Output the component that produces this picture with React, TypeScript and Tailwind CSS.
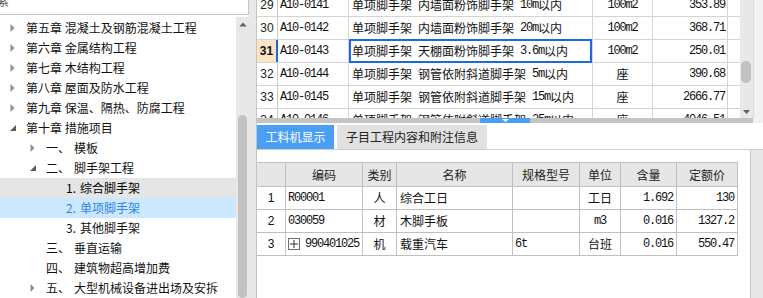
import React from "react";

const CJK = "font-['Noto_Sans_CJK_SC','Noto_Sans',sans-serif]";

function Mixed({ text }: { text: string }) {
  const parts = text.split(/([\x00-\x7F]+)/).filter((p) => p.length > 0);
  return (
    <>
      {parts.map((p, i) =>
        /^[\x00-\x7F]+$/.test(p) ? (
          <span key={i} className="font-['Liberation_Mono',monospace] tracking-[-1.2px] whitespace-pre">
            {p}
          </span>
        ) : (
          <span key={i}>{p}</span>
        )
      )}
    </>
  );
}

function ArrowRight() {
  return (
    <svg width="5" height="8" viewBox="0 0 5 8" className="block">
      <path d="M0.5 0 L4.5 4 L0.5 8 Z" fill="#8f8f8f" />
    </svg>
  );
}

function ArrowDown() {
  return (
    <svg width="6" height="6" viewBox="0 0 6 6" className="block">
      <path d="M6 0 L6 6 L0 6 Z" fill="#5a5a5a" />
    </svg>
  );
}

type TreeItem = {
  level: 0 | 1 | 2;
  arrow?: "r" | "d";
  num?: string;
  text: string;
  state?: "hover" | "sel";
};

const tree: TreeItem[] = [
  { level: 0, arrow: "r", text: "第五章 混凝土及钢筋混凝土工程" },
  { level: 0, arrow: "r", text: "第六章 金属结构工程" },
  { level: 0, arrow: "r", text: "第七章 木结构工程" },
  { level: 0, arrow: "r", text: "第八章 屋面及防水工程" },
  { level: 0, arrow: "r", text: "第九章 保温、隔热、防腐工程" },
  { level: 0, arrow: "d", text: "第十章 措施项目" },
  { level: 1, arrow: "r", num: "一、", text: "模板" },
  { level: 1, arrow: "d", num: "二、", text: "脚手架工程" },
  { level: 2, num: "1.", text: "综合脚手架", state: "hover" },
  { level: 2, num: "2.", text: "单项脚手架", state: "sel" },
  { level: 2, num: "3.", text: "其他脚手架" },
  { level: 1, num: "三、", text: "垂直运输" },
  { level: 1, num: "四、", text: "建筑物超高增加费" },
  { level: 1, arrow: "r", num: "五、", text: "大型机械设备进出场及安拆" },
];

function TreeRow({ item }: { item: TreeItem }) {
  const bg =
    item.state === "hover"
      ? "bg-[#e5e5e5]"
      : item.state === "sel"
      ? "bg-[#cce8ff] text-[#2e86e6]"
      : "text-[#111111]";
  const arrow = item.arrow === "r" ? <ArrowRight /> : item.arrow === "d" ? <ArrowDown /> : null;
  if (item.level === 0) {
    return (
      <div className={`flex h-[20px] items-center pl-[10px] whitespace-nowrap ${bg}`}>
        <div className="flex w-[16px] items-center">{arrow}</div>
        <span>{item.text}</span>
      </div>
    );
  }
  if (item.level === 1) {
    return (
      <div className={`flex h-[20px] items-center pl-[30px] whitespace-nowrap ${bg}`}>
        <div className="flex w-[16px] items-center">{arrow}</div>
        <span className="w-[28px]">{item.num}</span>
        <span>{item.text}</span>
      </div>
    );
  }
  return (
    <div className={`flex h-[20px] items-center pl-[66px] whitespace-nowrap ${bg}`}>
      <span className="w-[14px]">{item.num}</span>
      <span>{item.text}</span>
    </div>
  );
}

const topRows = [
  { n: "29", code: "A10-0141", name: "单项脚手架 内墙面粉饰脚手架 10m以内", unit: "100m2", price: "353.89" },
  { n: "30", code: "A10-0142", name: "单项脚手架 内墙面粉饰脚手架 20m以内", unit: "100m2", price: "368.71" },
  { n: "31", code: "A10-0143", name: "单项脚手架 天棚面粉饰脚手架 3.6m以内", unit: "100m2", price: "250.01", sel: true },
  { n: "32", code: "A10-0144", name: "单项脚手架 钢管依附斜道脚手架 5m以内", unit: "座", price: "390.68" },
  { n: "33", code: "A10-0145", name: "单项脚手架 钢管依附斜道脚手架 15m以内", unit: "座", price: "2666.77" },
  { n: "34", code: "A10-0146", name: "单项脚手架 钢管依附斜道脚手架 25m以内", unit: "座", price: "4046.51" },
];

const lowRows = [
  { n: "1", code: "R00001", cat: "人", name: "综合工日", spec: "", unit: "工日", qty: "1.692", price: "130" },
  { n: "2", code: "030059", cat: "材", name: "木脚手板", spec: "", unit: "m3", qty: "0.016", price: "1327.2" },
  { n: "3", code: "990401025", cat: "机", name: "载重汽车", spec: "6t", unit: "台班", qty: "0.016", price: "550.47", plus: true },
];

export default function App() {
  return (
    <div className={`flex h-[298px] w-[763px] overflow-hidden bg-white text-[12px] leading-none ${CJK}`}>
      {/* Left panel */}
      <div className="flex w-[249px] flex-col">
        <div className="h-[15px] shrink-0 overflow-hidden border-b border-r border-[#c6c6c6] bg-white">
          <span className="-ml-[3px] -mt-[5px] block text-[#555555]">索</span>
        </div>
        <div className="flex min-h-0 flex-1 pt-[2px]">
          <div className="w-[236px] overflow-hidden pt-px">
            {tree.map((t, i) => (
              <TreeRow key={i} item={t} />
            ))}
          </div>
          <div className="flex w-[13px] flex-col items-center bg-[#e8e8e8] pt-[5px]">
            <svg width="8" height="5" viewBox="0 0 8 5" className="block">
              <path d="M0 5 L4 0.5 L8 5 Z" fill="#606060" />
            </svg>
            <div className="mt-[88px] h-[200px] w-[9px] rounded-full bg-[#c2c2c2]" />
          </div>
        </div>
      </div>

      {/* Splitter */}
      <div className="w-[8px] border-r border-[#c4c4c4] bg-[#e8e8e8]" />

      {/* Right panel */}
      <div className="flex w-[506px] flex-col">
        {/* Top grid */}
        <div className="flex h-[118px] shrink-0">
          <div className="w-[483px] overflow-hidden">
            <div className="-mt-[6px]">
              {topRows.map((r) => (
                <div key={r.n} className="flex h-[23px] border-b border-[#d4d4d4]">
                  <div
                    className={`flex w-[21px] items-center justify-center font-['Liberation_Sans',sans-serif] ${
                      r.sel
                        ? "border-r-2 border-[#1a6be0] bg-[#fde4c4] font-bold text-[#111]"
                        : "border-r border-[#c8c8c8] text-[#222]"
                    }`}
                  >
                    {r.n}
                  </div>
                  <div className="flex w-[71px] items-center border-r border-[#d4d4d4] pl-[2px] font-['Liberation_Mono',monospace] tracking-[-1.2px] text-[#111]">
                    {r.code}
                  </div>
                  <div className="relative flex w-[244px] items-center whitespace-pre border-r border-[#d4d4d4] pl-[3px] text-[#111]">
                    <Mixed text={r.name} />
                    {r.sel && (
                      <div className="absolute -top-px left-0 right-0 -bottom-px border-2 border-[#1a6be0]" />
                    )}
                  </div>
                  <div className="flex w-[60px] items-center justify-center border-r border-[#d4d4d4] text-[#111]">
                    <Mixed text={r.unit} />
                  </div>
                  <div className="flex w-[75px] items-center justify-end border-r border-[#d4d4d4] pr-[2px] text-[#111]">
                    <Mixed text={r.price} />
                  </div>
                </div>
              ))}
            </div>
          </div>
          <div className="relative w-[13px] bg-[#e8e8e8]">
            <div className="absolute left-[1px] top-[61px] h-[22px] w-[10px] rounded-full bg-[#c2c2c2]" />
            <svg width="7" height="4" viewBox="0 0 7 4" className="absolute left-[3px] top-[110px] block">
              <path d="M0 0 L7 0 L3.5 4 Z" fill="#606060" />
            </svg>
          </div>
          <div className="w-[10px] border-l border-[#dcdcdc] bg-[#f2f2f2]" />
        </div>
        {/* Horizontal bar */}
        <div className="flex h-[5px] shrink-0">
          <div className="flex w-[496px] bg-[#c4c4c4]">
            <div className="ml-[223px] flex h-full w-[50px] items-center justify-center bg-[#4a9ff5]">
              <svg width="7" height="3" viewBox="0 0 7 3" className="block">
                <path d="M0 0 L7 0 L3.5 3 Z" fill="#ffffff" />
              </svg>
            </div>
          </div>
          <div className="w-[10px] bg-[#f2f2f2]" />
        </div>

        {/* Bottom section */}
        <div className="flex min-h-0 flex-1">
          <div className="flex w-[494px] flex-col">
            <div className="flex h-[27px] shrink-0 items-end gap-[3px] border-b border-[#cfcfcf]">
              <div className="flex h-[24px] w-[77px] items-center justify-center bg-[#4a9ff5] text-white">
                工料机显示
              </div>
              <div className="flex h-[24px] w-[150px] items-center justify-center bg-[#e1e1e1] text-[#222]">
                子目工程内容和附注信息
              </div>
            </div>
            <div className="flex-1 border-r border-[#c8c8c8] pt-[12px]">
              <div className="w-[481px] border-t border-[#c0c0c0]">
                <div className="flex h-[24px] border-b border-[#c0c0c0] bg-[#e6e6e6] text-[#222]">
                  <div className="w-[29px] border-r border-[#c0c0c0]" />
                  <div className="flex w-[77px] items-center justify-center border-r border-[#c0c0c0]">编码</div>
                  <div className="flex w-[34px] items-center justify-center border-r border-[#c0c0c0]">类别</div>
                  <div className="flex w-[116px] items-center justify-center border-r border-[#c0c0c0]">名称</div>
                  <div className="flex w-[67px] items-center justify-center border-r border-[#c0c0c0]">规格型号</div>
                  <div className="flex w-[41px] items-center justify-center border-r border-[#c0c0c0]">单位</div>
                  <div className="flex w-[56px] items-center justify-center border-r border-[#c0c0c0]">含量</div>
                  <div className="flex w-[61px] items-center justify-center border-r border-[#c0c0c0]">定额价</div>
                </div>
                {lowRows.map((r) => (
                  <div key={r.n} className="flex h-[23px] border-b border-[#c0c0c0] text-[#111]">
                    <div className="flex w-[29px] items-center justify-center border-r border-[#c0c0c0] font-['Liberation_Sans',sans-serif]">
                      {r.n}
                    </div>
                    <div className="flex w-[77px] items-center border-r border-[#c0c0c0] pl-[2px]">
                      {r.plus && (
                        <div className="mr-[5px] flex h-[12px] w-[12px] items-center justify-center border border-[#707070]">
                          <svg width="8" height="8" viewBox="0 0 8 8" className="block">
                            <path d="M4 0 V8 M0 4 H8" stroke="#333" strokeWidth="1" />
                          </svg>
                        </div>
                      )}
                      <Mixed text={r.code} />
                    </div>
                    <div className="flex w-[34px] items-center justify-center border-r border-[#c0c0c0]">{r.cat}</div>
                    <div className="flex w-[116px] items-center border-r border-[#c0c0c0] pl-[3px]">{r.name}</div>
                    <div className="flex w-[67px] items-center border-r border-[#c0c0c0] pl-[2px]">
                      <Mixed text={r.spec} />
                    </div>
                    <div className="flex w-[41px] items-center justify-center border-r border-[#c0c0c0]">
                      <Mixed text={r.unit} />
                    </div>
                    <div className="flex w-[56px] items-center justify-end border-r border-[#c0c0c0] pr-[3px]">
                      <Mixed text={r.qty} />
                    </div>
                    <div className="flex w-[61px] items-center justify-end border-r border-[#c0c0c0] pr-[3px]">
                      <Mixed text={r.price} />
                    </div>
                  </div>
                ))}
              </div>
            </div>
          </div>
          <div className="flex w-[12px] flex-col">
            <div className="h-[27px] border-b border-[#cfcfcf] bg-white" />
            <div className="flex-1 bg-[#e8e8e8]" />
          </div>
        </div>
      </div>
    </div>
  );
}
